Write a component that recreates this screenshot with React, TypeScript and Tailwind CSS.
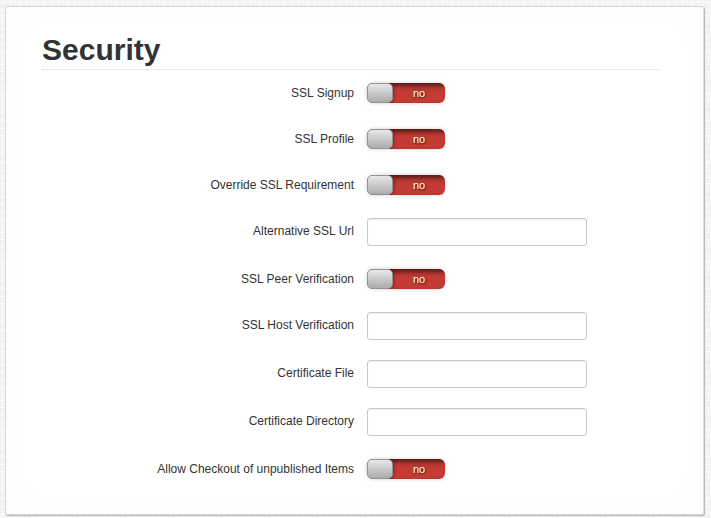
import { useState } from 'react';

type Field = { id: string; label: string; kind: 'switch' | 'text' };

const fields: Field[] = [
  { id: 'ssl-signup', label: 'SSL Signup', kind: 'switch' },
  { id: 'ssl-profile', label: 'SSL Profile', kind: 'switch' },
  { id: 'override-ssl', label: 'Override SSL Requirement', kind: 'switch' },
  { id: 'alternative-url', label: 'Alternative SSL Url', kind: 'text' },
  { id: 'peer-verification', label: 'SSL Peer Verification', kind: 'switch' },
  { id: 'host-verification', label: 'SSL Host Verification', kind: 'text' },
  { id: 'certificate-file', label: 'Certificate File', kind: 'text' },
  { id: 'certificate-directory', label: 'Certificate Directory', kind: 'text' },
  { id: 'allow-checkout', label: 'Allow Checkout of unpublished Items', kind: 'switch' },
];

function Switch({ id }: { id: string }) {
  const [on, setOn] = useState(false);
  return (
    <div
      className={`relative mt-1 flex h-5 w-[78px] overflow-hidden rounded-md shadow-[0_0_4px_rgba(0,0,0,0.2)] ${
        on ? 'flex-row-reverse bg-[#3b7fc4]' : 'bg-[#c43b35]'
      }`}
    >
      <span className="relative z-10 h-5 w-[26px] shrink-0 rounded-[5px] border border-[#949494] bg-linear-to-b from-[#e8e8e8] to-[#acacac] shadow-[0_0_4px_rgba(0,0,0,0.5)]" />
      <span className="-mx-1 grow text-center text-[11px] leading-5 text-white shadow-[inset_0_3px_5px_rgba(0,0,0,0.6)] [text-shadow:1px_1px_2px_rgba(0,0,0,0.7)]">
        {on ? 'yes' : 'no'}
      </span>
      <input
        id={id}
        type="checkbox"
        checked={on}
        onChange={(e) => setOn(e.target.checked)}
        className="absolute inset-0 z-20 cursor-pointer appearance-none"
      />
    </div>
  );
}

function Row({ field }: { field: Field }) {
  const isText = field.kind === 'text';
  return (
    <div className={`flex items-start gap-[13px] ${isText ? 'h-12' : 'h-[46px]'}`}>
      <label htmlFor={field.id} className="w-[312px] shrink-0 pt-[5px] text-right text-xs leading-[18px]">
        {field.label}
      </label>
      {isText ? (
        <input
          id={field.id}
          type="text"
          className="mt-px h-7 w-[220px] rounded-[3px] border border-[#c8c8c8] bg-white px-1.5 text-xs shadow-[inset_0_1px_1px_rgba(0,0,0,0.075)] outline-none focus:border-[#52a8ec]"
        />
      ) : (
        <Switch id={field.id} />
      )}
    </div>
  );
}

export default function App() {
  return (
    <main className="relative min-h-screen bg-[#f2f2f2] pt-1.5 pr-[7px] pb-[3px] pl-[5px] font-['Liberation_Sans',Arial,sans-serif] text-[#333]">
      <svg aria-hidden="true" className="absolute inset-0 size-full">
        <defs>
          <pattern id="bricks" width="48" height="42" patternUnits="userSpaceOnUse">
            <rect width="48" height="42" fill="#f3f3f3" />
            <path d="M5 3h10v6H5zM25 9h6v7h-6zM0 29h5v5H0zM36 22h7v7h-7z" fill="#eeeeee" />
            <path d="M0 2.500h48M0 9.500h48M0 15.500h48M0 22.500h48M0 29.500h48M0 36.500h48" stroke="#fcfcfc" />
            <path d="M5.500 0v9M10.500 0v9M15.500 0v9M20.500 0v9M26.500 0v9M31.500 0v9M37.500 0v9M43.500 0v9M2.500 9v27M8.500 9v27M14.500 9v27M20.500 9v27M26.500 9v27M32.500 9v27M38.500 9v27M44.500 9v27M6.500 36v6M12.500 36v6M23.500 36v6M34.500 36v6M42.500 36v6" stroke="#fafafa" />
          </pattern>
        </defs>
        <rect width="100%" height="100%" fill="url(#bricks)" />
      </svg>
      <section className="relative rounded-[2px] border border-[#d6d6d6] border-r-[#dedede] bg-white pt-[25px] pr-[43px] pb-[13px] pl-9 shadow-[inset_0_0_40px_rgba(0,0,0,0.016),1px_1px_1px_#b4b4b4]">
        <h1 className="mb-[9px] border-b border-dotted border-[#d4d4d4] pb-px text-3xl leading-9 font-bold">Security</h1>
        <form>
          {fields.map((field) => (
            <Row key={field.id} field={field} />
          ))}
        </form>
      </section>
    </main>
  );
}
